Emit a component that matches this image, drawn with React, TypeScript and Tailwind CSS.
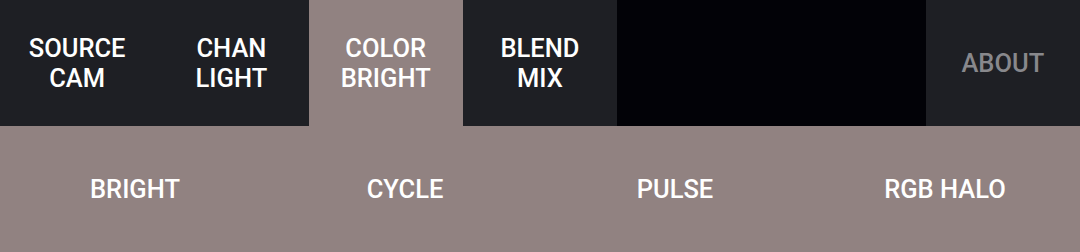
const tabs = [
  { label: ['SOURCE', 'CAM'] },
  { label: ['CHAN', 'LIGHT'] },
  { label: ['COLOR', 'BRIGHT'], active: true },
  { label: ['BLEND', 'MIX'] },
];

const modes = ['BRIGHT', 'CYCLE', 'PULSE', 'RGB HALO'];

export default function App() {
  return (
    <div
      className="w-[1080px] h-[252px] flex flex-col bg-[#918281] text-white font-medium text-[25.5px] leading-[30px]"
      style={{ fontFamily: 'Roboto, "Noto Sans", sans-serif' }}
    >
      <div className="grid grid-cols-7 h-[126px]">
        {tabs.map((t) => (
          <button
            key={t.label.join(' ')}
            className={`flex flex-col items-center justify-center ${
              t.active ? 'bg-[#918281]' : 'bg-[#1e1f24]'
            }`}
          >
            {t.label.map((l) => (
              <span key={l}>{l}</span>
            ))}
          </button>
        ))}
        <div className="col-span-2 bg-[#020207]" />
        <button className="flex items-center justify-center bg-[#1e1f24] text-[#88888c]">
          ABOUT
        </button>
      </div>
      <div className="grid grid-cols-4 flex-1">
        {modes.map((m) => (
          <button key={m} className="flex items-center justify-center">
            {m}
          </button>
        ))}
      </div>
    </div>
  );
}
